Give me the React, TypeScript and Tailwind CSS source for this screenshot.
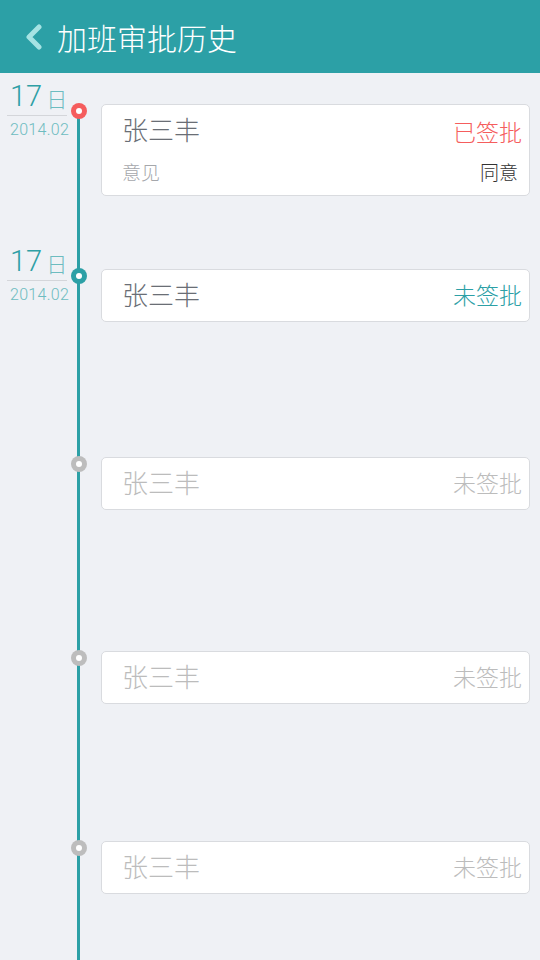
import React from "react";

const CJK = { fontFamily: '"Noto Sans CJK SC", "Noto Sans", sans-serif' };

function DateBlock() {
  return (
    <div className="-mt-[21px] pl-[10px] flex flex-col items-start">
      <div className="flex items-end h-[28px]">
        <span className="text-[29px] leading-none font-light text-[#2e9fa5]" style={{ fontFamily: "Roboto, sans-serif" }}>17</span>
        <span className="text-[21px] leading-none font-light text-[#6dbcc0] ml-[4px] mb-[2px]" style={CJK}>日</span>
      </div>
      <div className="h-px w-[60px] -ml-[3px] mt-[4px] bg-[#d4d6da]" />
      <div className="text-[16px] leading-none font-light text-[#6dbcc0] mt-[6px] tracking-[0.3px]" style={{ fontFamily: "Roboto, sans-serif" }}>2014.02</div>
    </div>
  );
}

function Dot({ color }: { color: string }) {
  return (
    <div className={`absolute left-[71px] -top-[1px] w-[16px] h-[16px] rounded-full flex items-center justify-center ${color}`}>
      <div className="w-[6px] h-[6px] rounded-full bg-white" />
    </div>
  );
}

function SimpleRow({ mt, date, dot, nameColor, status, statusColor }: { mt: string; date?: boolean; dot: string; nameColor: string; status: string; statusColor: string }) {
  return (
    <div className={`flex ${mt}`}>
      <div className="w-[101px] shrink-0 relative">
        {date && <DateBlock />}
        <Dot color={dot} />
      </div>
      <div className="flex-1 mr-[10px] h-[53px] bg-white border border-[#d9dbdf] rounded-[5px] flex items-center justify-between pl-[20px] pr-[7px] pb-[3px]">
        <span className={`text-[26px] leading-none font-light ${nameColor}`} style={CJK}>张三丰</span>
        <span className={`text-[23px] leading-none font-light ${statusColor}`} style={CJK}>{status}</span>
      </div>
    </div>
  );
}

export default function App() {
  return (
    <div className="w-[540px] h-[960px] bg-[#eff1f5] overflow-hidden flex flex-col" style={CJK}>
      <div className="h-[73px] shrink-0 bg-[#2ca0a6] flex items-center pl-[24px]">
        <svg width="20" height="26" viewBox="0 0 20 26" className="shrink-0">
          <path d="M15 3 L5 13 L15 23" fill="none" stroke="#a6e3e3" strokeWidth="5" strokeLinecap="round" strokeLinejoin="round" />
        </svg>
        <span className="ml-[13px] text-[30px] leading-none font-light text-white" style={CJK}>加班审批历史</span>
      </div>
      <div className="relative flex-1 flex flex-col">
        <div className="absolute left-[77px] top-[38px] bottom-0 w-[3px] bg-[#2ca0a6]" />
        <div className="flex mt-[31px]">
          <div className="w-[101px] shrink-0 relative">
            <DateBlock />
            <Dot color="bg-[#f55d5d]" />
          </div>
          <div className="flex-1 mr-[10px] h-[92px] bg-white border border-[#d9dbdf] rounded-[5px] flex flex-col pl-[20px]">
            <div className="h-[48px] flex items-center justify-between pr-[7px]">
              <span className="text-[26px] leading-none font-light text-[#6a6e75]" style={CJK}>张三丰</span>
              <span className="text-[23px] leading-none font-light text-[#f55d5d] mt-[5px]" style={CJK}>已签批</span>
            </div>
            <div className="h-[36px] flex items-center justify-between pr-[11px]">
              <span className="text-[19px] leading-none font-light text-[#a5a7ab]" style={CJK}>意见</span>
              <span className="text-[19px] leading-none font-light text-[#333333]" style={CJK}>同意</span>
            </div>
          </div>
        </div>
        <SimpleRow mt="mt-[73px]" date dot="bg-[#2ca0a6]" nameColor="text-[#6a6e75]" status="未签批" statusColor="text-[#2ca0a6]" />
        <SimpleRow mt="mt-[135px]" dot="bg-[#bdbdbd]" nameColor="text-[#bcbcbc]" status="未签批" statusColor="text-[#bcbcbc]" />
        <SimpleRow mt="mt-[141px]" dot="bg-[#bdbdbd]" nameColor="text-[#bcbcbc]" status="未签批" statusColor="text-[#bcbcbc]" />
        <SimpleRow mt="mt-[137px]" dot="bg-[#bdbdbd]" nameColor="text-[#bcbcbc]" status="未签批" statusColor="text-[#bcbcbc]" />
      </div>
    </div>
  );
}
